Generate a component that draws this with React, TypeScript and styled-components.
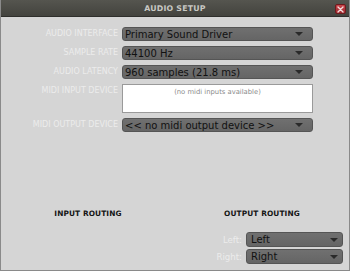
import { Fragment } from 'react';
import styled, { createGlobalStyle } from 'styled-components';

const GlobalStyle = createGlobalStyle`
  html, body {
    margin: 0;
    padding: 0;
    background: #d4d4d4;
  }
  * {
    box-sizing: border-box;
  }
`;

const Window = styled.div`
  width: 350px;
  height: 271px;
  display: flex;
  flex-direction: column;
  background: #d5d5d5;
  border: 1px solid #8a8a8a;
  border-top: none;
  font-family: "DejaVu Sans", Verdana, sans-serif;
  overflow: hidden;
`;

const TitleBar = styled.div`
  position: relative;
  height: 17px;
  flex-shrink: 0;
  display: flex;
  align-items: center;
  justify-content: center;
  background: linear-gradient(#55554f, #43433e);
  border-bottom: 1px solid #2e2e2b;
  margin: 0 -1px;
`;

const Title = styled.div`
  font-size: 7.8px;
  font-weight: bold;
  color: #c8c8c4;
  letter-spacing: 0.2px;
`;

const CloseButton = styled.div`
  position: absolute;
  right: 4px;
  top: 4px;
  width: 11px;
  height: 10px;
  border-radius: 2px;
  background: linear-gradient(#c8454a, #a02a30);
  border: 1px solid #6e1a1e;
  display: flex;
  align-items: center;
  justify-content: center;
`;

const Form = styled.div`
  display: grid;
  grid-template-columns: 117px 191px;
  column-gap: 4px;
  row-gap: 5px;
  padding: 10px 0 0 0;
`;

const Label = styled.div`
  font-size: 8px;
  color: #ececec;
  text-align: right;
  text-transform: uppercase;
  line-height: 14px;
  white-space: nowrap;
`;

const Select = styled.div`
  height: 14px;
  display: flex;
  align-items: center;
  justify-content: space-between;
  padding: 0 9px 0 2px;
  background: linear-gradient(#707070, #656565);
  border: 1px solid #555;
  border-radius: 3px;
  color: #111;
  font-size: 10px;
  white-space: nowrap;
`;

const Arrow = styled.span`
  width: 0;
  height: 0;
  border-left: 4px solid transparent;
  border-right: 4px solid transparent;
  border-top: 4px solid #2a2a2a;
`;

const ListBox = styled.div`
  height: 29px;
  background: #ffffff;
  border: 1px solid #9a9a9a;
  color: #8a8a8a;
  font-size: 6.8px;
  text-align: center;
  padding-top: 3px;
`;

const Routing = styled.div`
  display: grid;
  grid-template-columns: 1fr 1fr;
  margin-top: 77px;
`;

const RoutingColumn = styled.div`
  display: flex;
  flex-direction: column;
  align-items: center;
`;

const RoutingTitle = styled.div`
  font-size: 7.4px;
  font-weight: bold;
  color: #151515;
  letter-spacing: 0.1px;
`;

const ChannelList = styled.div`
  align-self: stretch;
  display: flex;
  flex-direction: column;
  gap: 2px;
  margin-top: 14px;
  padding-right: 6px;
`;

const ChannelRow = styled.div`
  display: flex;
  align-items: center;
  justify-content: flex-end;
  gap: 4px;
`;

const ChannelLabel = styled.div`
  font-size: 8.6px;
  color: #ececec;
`;

const ChannelSelect = styled(Select)`
  width: 97px;
  height: 15px;
  padding-left: 4px;
  padding-right: 4px;
`;

const fields = [
  { label: 'Audio Interface', value: 'Primary Sound Driver' },
  { label: 'Sample Rate', value: '44100 Hz' },
  { label: 'Audio Latency', value: '960 samples (21.8 ms)' },
];

export default function App() {
  return (
    <>
      <GlobalStyle />
      <Window>
        <TitleBar>
          <Title>AUDIO SETUP</Title>
          <CloseButton>
            <svg width="7" height="7" viewBox="0 0 7 7">
              <path d="M1 1L6 6M6 1L1 6" stroke="#f4dede" strokeWidth="1.4" strokeLinecap="round" />
            </svg>
          </CloseButton>
        </TitleBar>

        <Form>
          {fields.map((f) => (
            <Fragment key={f.label}>
              <Label>{f.label}</Label>
              <Select>
                {f.value}
                <Arrow />
              </Select>
            </Fragment>
          ))}
          <Label>Midi Input Device</Label>
          <ListBox>(no midi inputs available)</ListBox>
          <Label>Midi Output Device</Label>
          <Select>
            {'<< no midi output device >>'}
            <Arrow />
          </Select>
        </Form>

        <Routing>
          <RoutingColumn>
            <RoutingTitle>INPUT ROUTING</RoutingTitle>
          </RoutingColumn>
          <RoutingColumn>
            <RoutingTitle>OUTPUT ROUTING</RoutingTitle>
            <ChannelList>
              <ChannelRow>
                <ChannelLabel>Left:</ChannelLabel>
                <ChannelSelect>
                  Left
                  <Arrow />
                </ChannelSelect>
              </ChannelRow>
              <ChannelRow>
                <ChannelLabel>Right:</ChannelLabel>
                <ChannelSelect>
                  Right
                  <Arrow />
                </ChannelSelect>
              </ChannelRow>
            </ChannelList>
          </RoutingColumn>
        </Routing>
      </Window>
    </>
  );
}
